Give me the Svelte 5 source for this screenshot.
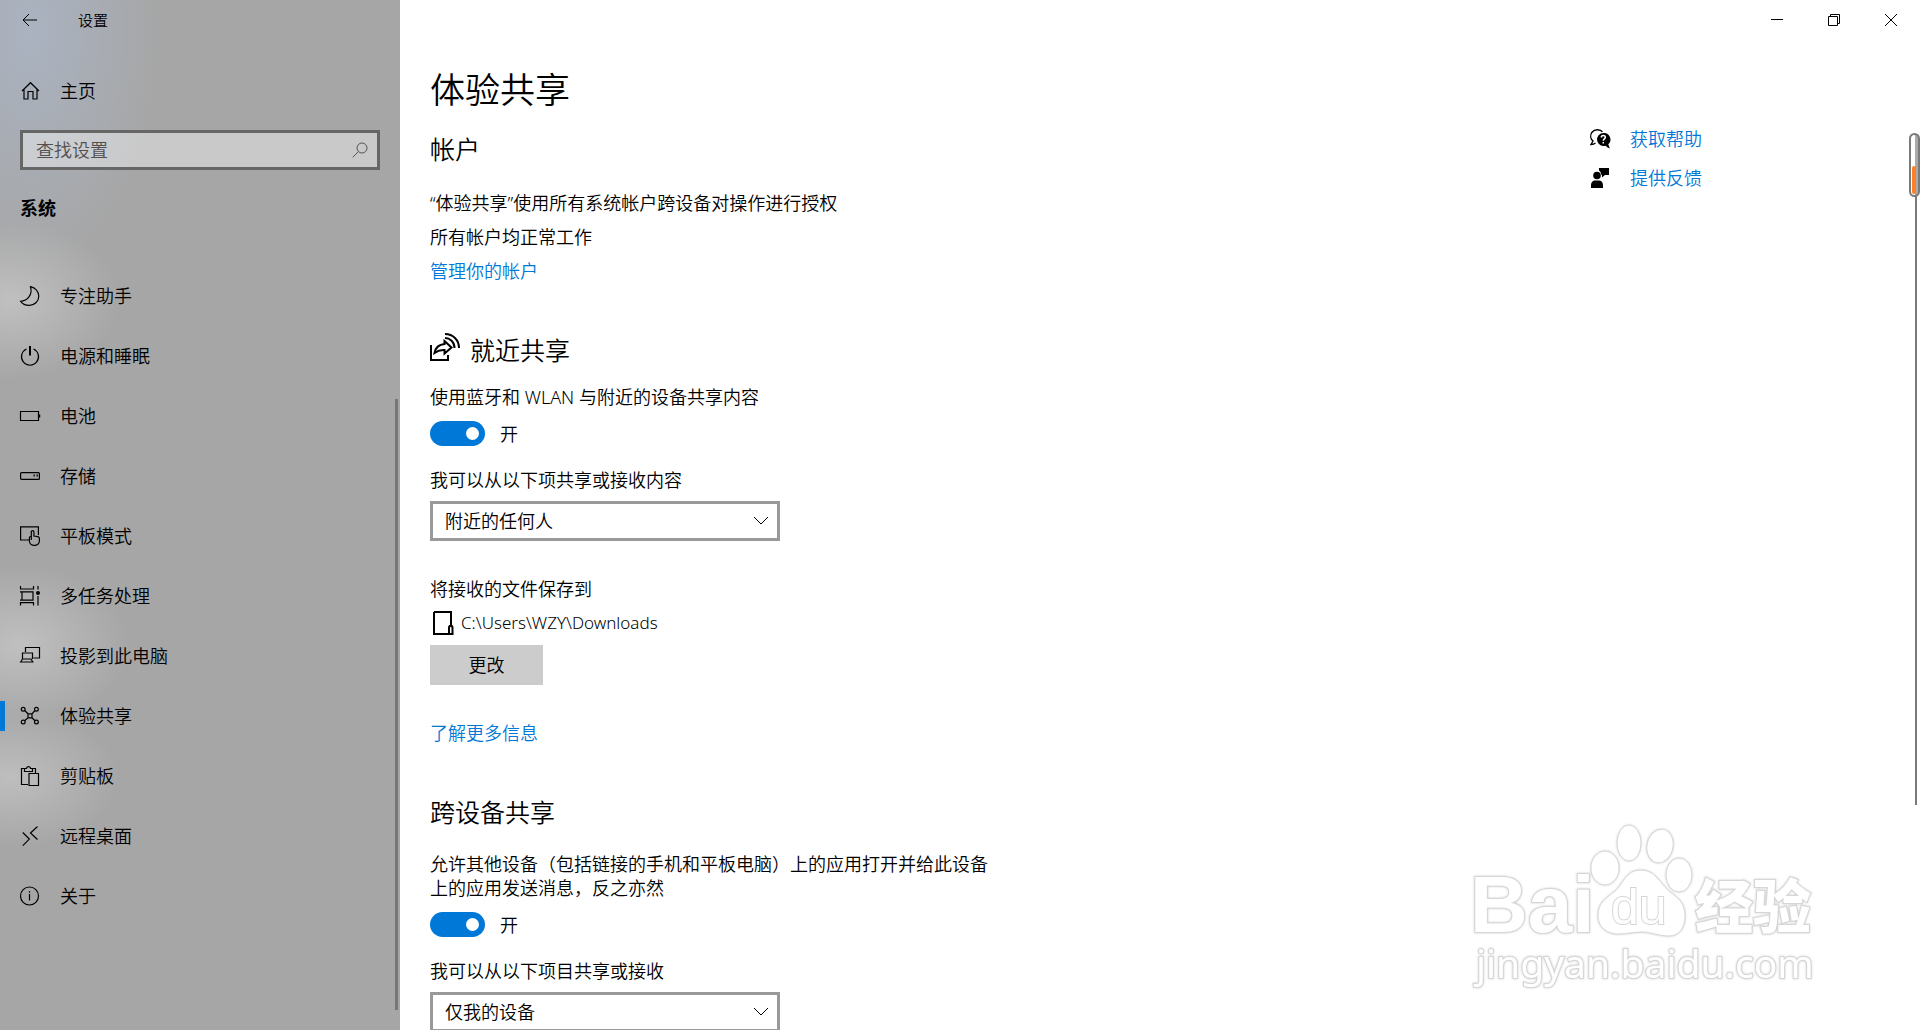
<script lang="ts">
	type NavItem = { id: string; label: string };

	const navItems: NavItem[] = [
		{ id: 'focus', label: '专注助手' },
		{ id: 'power', label: '电源和睡眠' },
		{ id: 'battery', label: '电池' },
		{ id: 'storage', label: '存储' },
		{ id: 'tablet', label: '平板模式' },
		{ id: 'multitask', label: '多任务处理' },
		{ id: 'project', label: '投影到此电脑' },
		{ id: 'shared', label: '体验共享' },
		{ id: 'clipboard', label: '剪贴板' },
		{ id: 'remote', label: '远程桌面' },
		{ id: 'about', label: '关于' },
	];

	let current = $state('shared');
	let query = $state('');
	let nearbyOn = $state(true);
	let crossOn = $state(true);
	let nearbyFrom = $state('附近的任何人');
	let crossFrom = $state('仅我的设备');
</script>

{#snippet navIcon(id: string)}
	<svg class="icon" viewBox="0 0 20 20" aria-hidden="true">
		{#if id === 'focus'}
			<path d="M10.5.7c4.900 1 8.300 4.800 8.300 9.500a9.300 9.300 0 0 1-9.600 9.100c-3.700 0-6.900-1.600-8.500-4 6.500-.4 12.300-6.500 9.800-14.600z" />
		{:else if id === 'power'}
			<path d="M6.500 3a8.500 8.500 0 1 0 7 0" /><path class="bold" d="M10 0v9.500" />
		{:else if id === 'battery'}
			<path d="M.5 5.500h18v9H.5z" /><path class="bold" d="M19.200 8.500v3" />
		{:else if id === 'storage'}
			<rect x=".6" y="6.600" width="18.800" height="6.800" rx="1" /><path class="bold" d="M13.500 9.500h1.300M16.500 9.500h1.300" />
		{:else if id === 'tablet'}
			<path d="M9 14H.6V.8h17.800V9" />
			<path d="M11.300 14V5.800c0-1.600 2.600-1.600 2.600 0v4.200l3.800.7c1 .2 1.700.8 1.700 1.800v2.700a4.800 4.200 0 0 1-5 4.100c-2.600 0-5-1.600-5-4.300v-3c0-1.200 1-2 1.900-1.600" />
		{:else if id === 'multitask'}
			<path d="M.5 0v3h13V0M.5 19.500v-2.800h13v2.800M2 5.800h11v8.400H2zM0 5.800h2M0 14.200h2M18 0v3.500M18 10v9.500" /><circle class="solid" cx="18" cy="7" r="2" />
		{:else if id === 'project'}
			<path d="M5.500 6V1.500h14v10.500h-6M2.500 13V7H12.500v6M.6 16l1.900-3H11l1.800 3z" />
		{:else if id === 'shared'}
			<circle cx="3.200" cy="3.200" r="1.900" /><circle cx="16.400" cy="3.200" r="1.900" />
			<circle cx="3.200" cy="16" r="1.900" /><circle cx="16.400" cy="16" r="1.900" />
			<path d="M8 7.800h4v4H8zM4.600 4.500L8 7.800M15 4.500l-3 3.300M4.600 14.700L8 11.800M15 14.700l-3-2.900" />
		{:else if id === 'clipboard'}
			<path d="M8 18.500H1.500V2.500H5M12 2.500h3.500V7M4.500 5.500h8v-3H10.500c0-2.500-4-2.500-4 0H4.500zM9 7.500h9.500v12H9z" />
		{:else if id === 'remote'}
			<path d="M2.800 6.500l6.500 6.600-6.500 6.500M17.500.5l-7 6.500 7 6.500" />
		{:else}
			<circle cx="9.500" cy="10" r="9" /><path d="M9.500 8v6.500M9.500 5.300v1.400" />
		{/if}
	</svg>
{/snippet}

{#snippet chevron()}
	<svg class="chevron" viewBox="0 0 16 10" aria-hidden="true"><path d="M1 1l7 7 7-7" /></svg>
{/snippet}

<div class="window" lang="zh-CN">
	<aside class="sidebar">
		<header class="titlebar">
			<button type="button" class="back" aria-label="返回">
				<svg viewBox="0 0 16 14"><path d="M7 1L1 7l6 6M1 7h14" /></svg>
			</button>
			<span class="app-name">设置</span>
		</header>

		<a class="home" href="#home">
			<svg class="icon" viewBox="0 0 20 20" aria-hidden="true">
				<path d="M2 10L10.500 1.700 19 10M4 8.500V18h4v-7.500h5V18h4V8.500" />
			</svg>
			主页
		</a>

		<label class="search">
			<input type="text" placeholder="查找设置" aria-label="查找设置" bind:value={query} />
			<svg viewBox="0 0 16 16" aria-hidden="true"><circle cx="10" cy="6" r="5" /><path d="M6.500 9.500L.7 15.300" /></svg>
		</label>

		<h2 class="group">系统</h2>

		<nav>
			{#each navItems as item}
				<a href="#{item.id}" class="nav-item" class:active={current === item.id}
					onclick={() => (current = item.id)}>
					{@render navIcon(item.id)}
					{item.label}
				</a>
			{/each}
		</nav>
		<div class="side-scroll"></div>
	</aside>

	<main>
		<div class="controls">
			<button type="button" aria-label="最小化"><svg viewBox="0 0 12 12"><path d="M0 5.500h12" /></svg></button>
			<button type="button" aria-label="还原"><svg viewBox="0 0 12 12"><path d="M.5 2.500h9v9h-9zM2.500 2.500v-2h9v9h-2" /></svg></button>
			<button type="button" aria-label="关闭"><svg viewBox="0 0 12 12"><path d="M0 0l12 12M12 0L0 12" /></svg></button>
		</div>

		<div class="columns">
			<div class="content">
				<h1>体验共享</h1>

				<section>
					<h2>帐户</h2>
					<p class="lead">“体验共享”使用所有系统帐户跨设备对操作进行授权</p>
					<p class="row">所有帐户均正常工作</p>
					<a class="row" href="#accounts">管理你的帐户</a>
				</section>

				<section>
					<h2 class="with-icon">
						<svg viewBox="0 0 30 30" aria-hidden="true">
							<path d="M1 12v15h17v-5M4.500 20c1-5.500 4.500-8.500 10-9V8l7 6.500-7 6V17c-4-.3-7 .7-10 3z" />
							<path d="M15 5c5 0 9.500 4 9.500 10M15 1c8 0 14 6 14 14" />
						</svg>
						就近共享
					</h2>
					<p class="tight">使用蓝牙和 WLAN 与附近的设备共享内容</p>
					<label class="toggle">
						<input type="checkbox" role="switch" bind:checked={nearbyOn} />
						<span>{nearbyOn ? '开' : '关'}</span>
					</label>
					<label class="field-label" for="nearby-from">我可以从以下项共享或接收内容</label>
					<div class="select">
						<select id="nearby-from" bind:value={nearbyFrom}>
							<option>附近的任何人</option>
							<option>仅我的设备</option>
						</select>
						{@render chevron()}
					</div>
					<p class="spaced">将接收的文件保存到</p>
					<div class="path row">
						<svg viewBox="0 0 22 24" aria-hidden="true"><path d="M2 1h17v14M2 1v22h18.500v-6c0-3-3.500-3-3.500 0v6" /></svg>
						<span>C:\Users\WZY\Downloads</span>
					</div>
					<button type="button" class="change">更改</button>
					<a class="spaced" href="#more">了解更多信息</a>
				</section>

				<section>
					<h2>跨设备共享</h2>
					<p class="desc">允许其他设备（包括链接的手机和平板电脑）上的应用打开并给此设备上的应用发送消息，反之亦然</p>
					<label class="toggle">
						<input type="checkbox" role="switch" bind:checked={crossOn} />
						<span>{crossOn ? '开' : '关'}</span>
					</label>
					<label class="field-label" for="cross-from">我可以从以下项目共享或接收</label>
					<div class="select">
						<select id="cross-from" bind:value={crossFrom}>
							<option>仅我的设备</option>
							<option>附近的任何人</option>
						</select>
						{@render chevron()}
					</div>
				</section>
			</div>

			<div class="help">
				<a href="#help">
					<svg viewBox="0 0 20 20" aria-hidden="true">
						<path class="line" d="M12.500 3C10.500-.2 4.500 0 2 3.200-.2 6.500.6 10 3 12L1 15.500c2 0 3.500-.6 4.500-1.500" />
						<path d="M13.500 4a6.500 6.500 0 1 0 2 12.700c1.300 1.200 2.800 2.300 4.300 2.800l-1.500-4.200A6.500 6.500 0 0 0 13.500 4z" />
						<path class="mark" d="M11.300 8.500c0-2.700 4-2.500 4-.2 0 1.700-2 1.600-2 3.500M13.300 13v1.500" />
					</svg>
					获取帮助
				</a>
				<a href="#feedback">
					<svg viewBox="0 0 20 20" aria-hidden="true">
						<circle cx="7" cy="7.500" r="3.800" /><path d="M1 20v-2.500c0-3.500 2-5 4-5h4c2.200 0 4 1.500 4 5V20zM9 0h10v7h-4l-3 2.500V7l-1-.5C11 4.500 10.500 3.500 9 2.500z" />
					</svg>
					提供反馈
				</a>
			</div>
		</div>

		<div class="main-scroll"></div>
		<div class="gauge"><span></span></div>

		<svg class="watermark" viewBox="0 0 360 180" aria-label="Baidu 经验">
			<text class="brand" x="5" y="112">Bai</text>
			<ellipse cx="140" cy="48" rx="14" ry="17" />
			<ellipse cx="164" cy="23" rx="12" ry="18" />
			<ellipse cx="195" cy="26" rx="13" ry="17" transform="rotate(12 195 26)" />
			<ellipse cx="214" cy="55" rx="13" ry="17" />
			<path d="M176 50c-16 0-17 14-27 22-9 7-16 11-16 24 0 12 10 18 20 18 9 0 15-2 24-2s16 4 27 4c10 0 16-8 16-20 0-15-9-19-16-25-9-8-14-21-28-21z" />
			<text class="du" x="146" y="104">du</text>
			<text class="cjk" x="230" y="108">经验</text>
			<text class="url" x="11" y="158">jingyan.baidu.com</text>
		</svg>
	</main>
</div>

<style>
	:global(body) { margin: 0; }
	.window { display: flex; height: 100vh; overflow: hidden; background: #fff; color: #000; font: 350 18px/24px "Noto Sans", "Noto Sans CJK SC", sans-serif; }
	h1, h2, p { margin: 0; font-weight: 350; }
	a { color: #0078d7; text-decoration: none; }
	button { padding: 0; border: 0; background: none; font: inherit; color: inherit; cursor: pointer; }
	svg { display: block; fill: none; stroke: #000; overflow: visible; }

	.sidebar {
		position: relative; display: flex; flex-direction: column; flex: 0 0 400px;
		background:
			radial-gradient(ellipse 110px 80px at 10px 300px, #bfc0bf, transparent),
			radial-gradient(ellipse 110px 80px at 20px 645px, #c0c0c0, transparent),
			radial-gradient(ellipse 110px 70px at 10px 778px, #bebebe, transparent),
			radial-gradient(ellipse 130px 240px at 30px 30px, #aab3c1, transparent),
			#a6a6a6;
	}
	.titlebar { display: flex; align-items: center; height: 40px; padding-left: 22px; }
	.back svg { width: 16px; height: 14px; }
	.app-name { margin-left: 40px; font-size: 15px; }
	.icon { flex: none; width: 20px; height: 20px; stroke-width: 1.200; }
	.icon .bold { stroke-width: 2; }
	.icon .solid { fill: #000; stroke: none; }
	.home { display: flex; align-items: center; gap: 20px; height: 40px; margin-top: 31px; padding-left: 20px; color: #000; }
	.search { display: flex; align-items: center; box-sizing: border-box; height: 40px; margin: 19px 20px 0; padding: 0 9px 0 13px; border: 3px solid #666; background: rgb(255 255 255 / .4); }
	.search input { flex: 1; min-width: 0; padding: 0; border: 0; outline: 0; background: none; font: inherit; }
	.search input::placeholder { color: #505050; opacity: 1; }
	.search svg { width: 16px; height: 16px; stroke: #555; }
	.group { margin: 26px 20px 0; font-size: 18px; font-weight: 700; }
	nav { margin-top: 46px; }
	.nav-item { position: relative; display: flex; align-items: center; gap: 20px; height: 60px; padding-left: 20px; color: #000; }
	.nav-item.active::before { content: ''; position: absolute; left: 0; width: 5px; height: 30px; background: #0078d7; }
	.side-scroll { position: absolute; top: 399px; right: 2px; bottom: 20px; width: 3px; background: #767676; }

	main { position: relative; flex: 1; min-width: 0; overflow: hidden; }
	.controls { display: flex; justify-content: flex-end; height: 40px; padding-right: 1px; }
	.controls button { display: grid; place-items: center; width: 57px; }
	.controls svg { width: 12px; height: 12px; }
	.columns { display: flex; justify-content: space-between; padding: 25px 0 0 30px; }
	.help { flex: 0 0 330px; padding-top: 62px; }
	.help a { display: flex; align-items: center; gap: 20px; height: 24px; margin-bottom: 15px; }
	.help svg { width: 20px; height: 20px; fill: #000; stroke: none; }
	.help .line { fill: none; stroke: #000; stroke-width: 1.400; }
	.help .mark { fill: none; stroke: #fff; stroke-width: 1.500; }

	h1 { font-size: 35px; line-height: 50px; }
	section { display: flex; flex-direction: column; align-items: flex-start; margin-bottom: 50px; }
	section:first-of-type { margin-top: 17px; }
	section h2 { font-size: 25px; line-height: 34px; }
	.with-icon { display: flex; gap: 10px; }
	.with-icon svg { width: 30px; height: 30px; stroke-width: 2; }
	.lead { margin-top: 25px; }
	.row { margin-top: 10px; }
	.tight { margin-top: 18px; }
	.spaced { margin-top: 36px; }
	.desc { max-width: 570px; margin-top: 23px; }
	.toggle { display: flex; align-items: center; gap: 15px; height: 25px; margin-top: 12px; }
	.toggle input { appearance: none; display: flex; align-items: center; justify-content: flex-end; box-sizing: border-box; width: 55px; height: 25px; margin: 0; padding: 0 6px; border-radius: 13px; background: #0078d7; }
	.toggle input::before { content: ''; width: 13px; height: 13px; border-radius: 50%; background: #fff; }
	.toggle input:not(:checked) { justify-content: flex-start; background: #999; }
	.field-label { margin-top: 22px; }
	.select { display: grid; align-items: center; width: 350px; margin-top: 9px; }
	.select > :global(*) { grid-area: 1 / 1; }
	.select select { appearance: none; box-sizing: border-box; width: 100%; height: 40px; padding: 0 12px; border: 3px solid #999; border-radius: 0; background: #fff; color: #000; font: inherit; }
	.chevron { justify-self: end; width: 16px; height: 10px; margin-right: 11px; pointer-events: none; }
	.path { display: flex; align-items: center; gap: 7px; padding-left: 2px; font-size: 17px; }
	.path svg { width: 22px; height: 24px; stroke-width: 2; }
	.change { width: 113px; height: 40px; margin-top: 10px; background: #ccc; }

	.main-scroll { position: absolute; top: 195px; right: 3px; width: 2px; height: 610px; background: #7a7a7a; }
	.gauge { position: absolute; top: 133px; right: 0; display: flex; align-items: flex-end; box-sizing: border-box; width: 11px; height: 64px; padding-bottom: 1px; border: 2px solid #7a7a7a; border-radius: 6px; background: linear-gradient(90deg, #fff 4px, #aaa 4px); }
	.gauge span { width: 4px; height: 28px; margin-left: 1px; border-radius: 2px; background: #ff7f27; }
	.watermark { position: absolute; right: 95px; bottom: 30px; width: 360px; height: 180px; fill: #fff; stroke: #d6d6d6; filter: drop-shadow(0 0 1px #ccc); pointer-events: none; }
	.watermark text { paint-order: stroke; stroke-width: 2; }
	.brand { font: 700 80px "Liberation Sans", sans-serif; }
	.du { font: 50px "Liberation Sans", sans-serif; }
	.cjk { font: 900 58px "Noto Sans CJK SC", sans-serif; }
	.url { font: 400 39px "Noto Sans", sans-serif; }
</style>
